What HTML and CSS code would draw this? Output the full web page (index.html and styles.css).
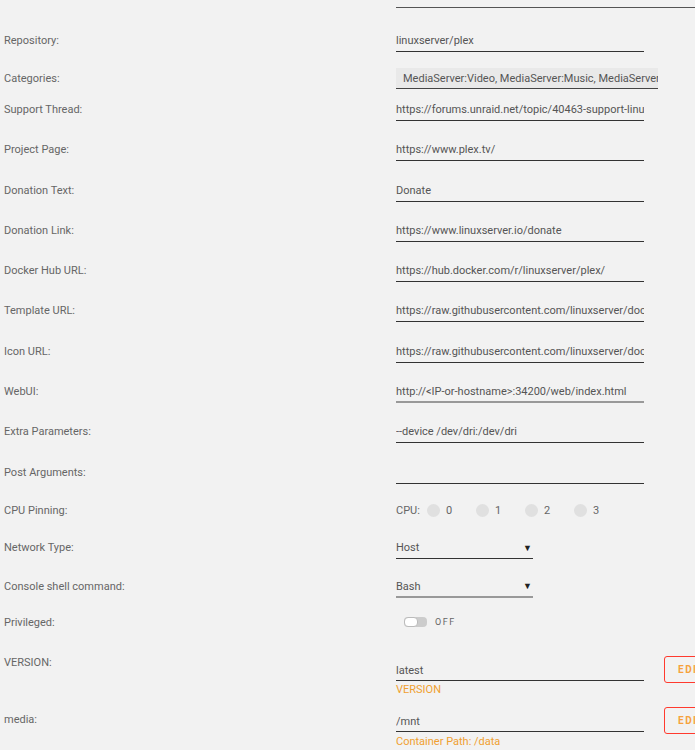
FILE: index.html
```html
<!DOCTYPE html>
<html>
  <head>
    <title>Update Container</title>
    <link rel="stylesheet" href="styles.css">
  </head>
  <body>
    <div class="form">
      <div class="row row-top">
        <div class="label"></div>
        <div class="field"><div class="top-line"></div></div>
      </div>

      <div class="row row-repo">
        <div class="label">Repository:</div>
        <div class="field"><input class="text" value="linuxserver/plex"></div>
      </div>

      <div class="row row-cat">
        <div class="label">Categories:</div>
        <div class="field"><input class="text categories" value="MediaServer:Video, MediaServer:Music, MediaServer:Photos" readonly></div>
      </div>

      <div class="row row-support">
        <div class="label">Support Thread:</div>
        <div class="field"><input class="text" value="https://forums.unraid.net/topic/40463-support-linuxserverio-plex-media-server/"></div>
      </div>

      <div class="row row-project">
        <div class="label">Project Page:</div>
        <div class="field"><input class="text" value="https://www.plex.tv/"></div>
      </div>

      <div class="row gap1">
        <div class="label">Donation Text:</div>
        <div class="field"><input class="text" value="Donate"></div>
      </div>

      <div class="row">
        <div class="label">Donation Link:</div>
        <div class="field"><input class="text" value="https://www.linuxserver.io/donate"></div>
      </div>

      <div class="row">
        <div class="label">Docker Hub URL:</div>
        <div class="field"><input class="text" value="https://hub.docker.com/r/linuxserver/plex/"></div>
      </div>

      <div class="row">
        <div class="label">Template URL:</div>
        <div class="field"><input class="text" value="https://raw.githubusercontent.com/linuxserver/docker-templates/master/linuxserver.io/plex.xml"></div>
      </div>

      <div class="row gap1">
        <div class="label">Icon URL:</div>
        <div class="field"><input class="text" value="https://raw.githubusercontent.com/linuxserver/docker-templates/master/linuxserver.io/img/plex-icon.png"></div>
      </div>

      <div class="row">
        <div class="label">WebUI:</div>
        <div class="field"><input class="text light" value="http://<IP-or-hostname>:34200/web/index.html"></div>
      </div>

      <div class="row">
        <div class="label">Extra Parameters:</div>
        <div class="field"><input class="text" value="--device /dev/dri:/dev/dri"></div>
      </div>

      <div class="row gap1">
        <div class="label">Post Arguments:</div>
        <div class="field"><input class="text" value=""></div>
      </div>

      <div class="row row-cpu">
        <div class="label">CPU Pinning:</div>
        <div class="field">
          <span class="cpu-label">CPU:</span>
          <label class="cpu"><span class="dot"></span>0</label>
          <label class="cpu"><span class="dot"></span>1</label>
          <label class="cpu"><span class="dot"></span>2</label>
          <label class="cpu"><span class="dot"></span>3</label>
        </div>
      </div>

      <div class="row row-net">
        <div class="label">Network Type:</div>
        <div class="field">
          <div class="select">
            <span>Host</span>
            <span class="arrow">&#9660;</span>
          </div>
        </div>
      </div>

      <div class="row">
        <div class="label">Console shell command:</div>
        <div class="field">
          <div class="select light">
            <span>Bash</span>
            <span class="arrow">&#9660;</span>
          </div>
        </div>
      </div>

      <div class="row row-priv">
        <div class="label">Privileged:</div>
        <div class="field">
          <span class="switch"><span class="knob"></span></span>
          <span class="switch-text">OFF</span>
        </div>
      </div>

      <div class="row row-config row-version">
        <div class="label">VERSION:</div>
        <div class="field">
          <div class="config-line">
            <input class="text" value="latest">
            <button class="edit">EDIT</button>
          </div>
          <div class="hint">VERSION</div>
        </div>
      </div>

      <div class="row row-config row-media">
        <div class="label">media:</div>
        <div class="field">
          <div class="config-line">
            <input class="text" value="/mnt">
            <button class="edit">EDIT</button>
          </div>
          <div class="hint">Container Path: /data</div>
        </div>
      </div>
    </div>
  </body>
</html>
```

FILE: styles.css
```css
html, body {
  overflow: hidden;
}

body {
  margin: 0;
  background-color: #f2f2f2;
  font-family: Roboto, "Open Sans", sans-serif;
  font-size: 11px;
  color: #666;
}

.form {
  width: 695px;
}

.row {
  display: flex;
  align-items: center;
  height: 40px;
}

.label {
  width: 396px;
  flex: none;
  box-sizing: border-box;
  padding-left: 4px;
  padding-top: 2px;
  line-height: 14px;
  color: #666;
}

.field {
  display: flex;
  align-items: center;
  flex: 1;
  min-width: 0;
}

.row-top {
  height: 8px;
  align-items: flex-start;
}

.top-line {
  width: 299px;
  height: 7px;
  border-bottom: 1px solid #555;
}

.row-repo {
  margin-top: 12px;
}

.row-cat {
  height: 36px;
}

.row-support {
  height: 26px;
}

.row-project {
  margin-top: 7px;
}

.gap1 {
  margin-top: 1px;
}

.text {
  width: 248px;
  height: 20px;
  box-sizing: content-box;
  padding: 2px 0 0 0;
  border: none;
  border-bottom: 1px solid #333;
  background: transparent;
  font-family: Roboto, "Open Sans", sans-serif;
  font-size: 11px;
  color: #555;
  outline: none;
}

.text.light {
  height: 19px;
  border-bottom: 2px solid #999;
}

.categories {
  width: 255px;
  height: 19px;
  padding: 1px 0 0 7px;
  margin-top: 1px;
  background-color: #e9e9e9;
  border-bottom-color: #444;
}

.row-cpu {
  height: 36px;
}

.cpu-label {
  margin-right: 7px;
}

.cpu {
  display: inline-flex;
  align-items: center;
  width: 49px;
  color: #666;
}

.dot {
  width: 13px;
  height: 13px;
  margin-right: 6px;
  border-radius: 50%;
  background-color: #e0e0e0;
}

.row-net {
  height: 38px;
}

.select {
  display: flex;
  justify-content: space-between;
  align-items: center;
  width: 137px;
  height: 20px;
  padding-top: 2px;
  border-bottom: 1px solid #333;
  color: #555;
}

.select.light {
  height: 19px;
  border-bottom: 2px solid #999;
}

.arrow {
  font-size: 9px;
  color: #222;
  margin-right: 1px;
}

.row-priv {
  height: 32px;
}

.switch {
  position: relative;
  display: inline-block;
  width: 23px;
  height: 10px;
  margin-left: 8px;
  margin-right: 8px;
  border-radius: 4px;
  background-color: #ccc;
}

.knob {
  position: absolute;
  left: 0;
  top: 0;
  width: 12px;
  height: 8px;
  border: 1px solid #bbb;
  border-radius: 4px;
  background-color: #fff;
}

.switch-text {
  font-size: 9px;
  letter-spacing: 1.5px;
  color: #666;
}

.row-config {
  height: auto;
  align-items: flex-start;
}

.row-config .field {
  flex-direction: column;
  align-items: flex-start;
}

.row-version .label {
  padding-top: 18px;
}

.row-version .field {
  padding-top: 18px;
}

.row-media .label {
  padding-top: 16px;
}

.row-media .field {
  padding-top: 10px;
}

.config-line {
  display: flex;
  align-items: center;
}

.edit {
  flex: none;
  height: 27px;
  margin-left: 20px;
  padding: 0 13px;
  border: 1px solid #ff3a2e;
  border-radius: 3px;
  background: transparent;
  font-family: Roboto, sans-serif;
  font-size: 10px;
  font-weight: bold;
  letter-spacing: 1.5px;
  color: #f6a23c;
}

.hint {
  line-height: 14px;
  color: #f0a030;
}

.row-media .hint {
  margin-top: 1px;
}
```
